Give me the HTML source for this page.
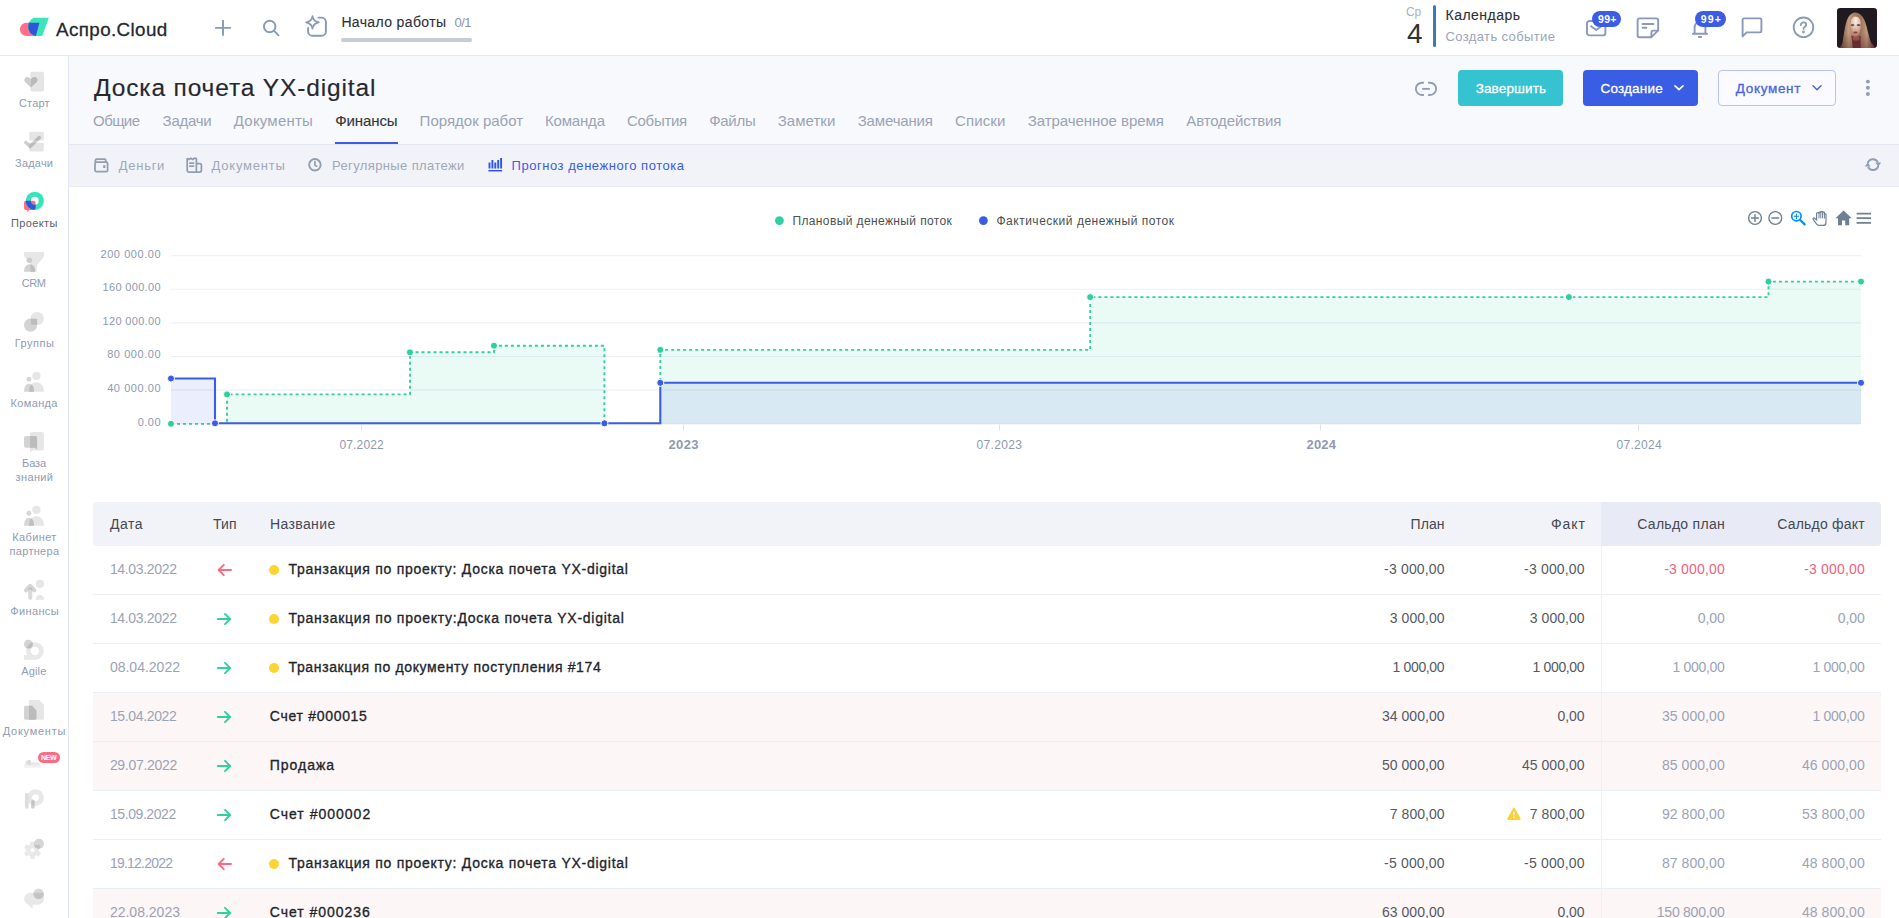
<!DOCTYPE html>
<html lang="ru">
<head>
<meta charset="utf-8">
<title>Доска почета YX-digital</title>
<style>
*{box-sizing:border-box;margin:0;padding:0}
html,body{width:1899px;height:918px;overflow:hidden;background:#fff}
body{position:relative;font-family:"Liberation Sans",sans-serif;color:#333;-webkit-font-smoothing:antialiased}
.a{position:absolute}
.t{position:absolute;white-space:nowrap;line-height:1;font-family:"Liberation Sans",sans-serif}
svg{position:absolute;overflow:visible}
/* top bar */
#topbar{left:0;top:0;width:1899px;height:56px;background:#fff;border-bottom:1px solid #e6e9f2}
/* sidebar */
#sidebar{left:0;top:56px;width:69px;height:862px;background:#fff;border-right:1px solid #e3e7f3}
/* page head */
#pagehead{left:69px;top:56px;width:1830px;height:88px;background:#f8f9fd}
#tabline{left:69px;top:144px;width:1830px;height:1px;background:#e3e7f1}
#tabactive{left:335px;top:142px;width:63px;height:2px;background:#3b5ce4}
#subnav{left:69px;top:145px;width:1830px;height:42px;background:#f2f3f8;border-bottom:1px solid #e9ebf3}
.btn{border-radius:4px;height:36px;top:70px}
/* table */
#thead{left:93px;top:502px;width:1788px;height:44px;background:#f2f3f8;border-radius:4px;overflow:hidden}
#thead i{position:absolute;left:1508px;top:0;width:280px;height:44px;background:#e8ebf5}
.row{left:93px;width:1788px;height:49px;border-bottom:1px solid #eceef6}
.row.p{background:#fdf6f6}
.row i{position:absolute;left:1508px;top:0;width:1px;height:49px;background:#eef0f7}
.dot{width:10px;height:10px;border-radius:50%;background:#fdd432}
</style>
</head>

<body>
<div class="a" id="topbar"></div>
<!-- logo -->
<svg style="left:14px;top:10px" width="40" height="30" viewBox="14 10 40 30">
  <defs><clipPath id="lgc"><path d="M33.6 17.65H47.7C48.5 17.65 48.8 18.1 48.5 18.8L42.6 35.1C42.4 35.6 42 35.9 41.4 35.9H35.2A9.8 9.8 0 0 1 28.2 27A10.4 10.4 0 0 1 33.6 17.65Z"/></clipPath></defs>
  <path d="M26.5 22.75H39.5L35.8 35.9H26.5A6.575 6.575 0 0 1 26.5 22.75Z" fill="#ff6f88"/>
  <path d="M33.6 17.65H47.7C48.5 17.65 48.8 18.1 48.5 18.8L42.6 35.1C42.4 35.6 42 35.9 41.4 35.9H35.2A9.8 9.8 0 0 1 28.2 27A10.4 10.4 0 0 1 33.6 17.65Z" fill="#3be6b9"/>
  <path d="M26.5 22.75H39.5L35.8 35.9H26.5A6.575 6.575 0 0 1 26.5 22.75Z" fill="#3055d8" clip-path="url(#lgc)"/>
</svg>
<!-- plus -->
<svg style="left:205px;top:8px" width="130" height="40" viewBox="205 8 130 40" fill="none" stroke="#8799b3" stroke-width="1.9" stroke-linecap="butt" stroke-linejoin="round">
  <path d="M223 20V35.8M215.1 27.9H230.9"/>
  <circle cx="269.7" cy="26.5" r="5.75"/><path d="M273.9 30.7L278.5 35.3" stroke-linecap="round"/>
  <path d="M318.4 17.6H321.6A4.3 4.3 0 0 1 325.9 21.9V31.4A4.3 4.3 0 0 1 321.6 35.7H312.4A4.3 4.3 0 0 1 308.1 31.4V27.9" stroke-linecap="round"/>
  <path d="M312.5 16.1C313 19.6 314.7 21.6 318.8 22.4C314.7 23.2 313 25.2 312.5 28.7C312 25.2 310.3 23.2 306.2 22.4C310.3 21.6 312 19.6 312.5 16.1Z" stroke-width="1.7"/>
</svg>
<div class="a" style="left:341px;top:38px;width:131px;height:4px;border-radius:2px;background:#c6ccda"></div>
<!-- calendar -->
<div class="a" style="left:1433px;top:5px;width:3px;height:42px;border-radius:1.5px;background:#3a7cb5"></div>
<!-- mail -->
<svg style="left:1586px;top:20px" width="21" height="17" viewBox="0 0 21 17" fill="none" stroke="#8b97bb" stroke-width="1.9" stroke-linejoin="round"><rect x="1" y="1" width="18.4" height="14.4" rx="2.4"/><path d="M5 6.2L10.2 10L15.4 6.2" stroke-linecap="round"/></svg>
<div class="a" style="left:1592.2px;top:10.7px;width:29.2px;height:16px;border-radius:8px;background:#3b5ce4"></div>
<!-- note -->
<svg style="left:1636px;top:17px" width="24" height="22" viewBox="0 0 24 22" fill="none" stroke="#8b97bb" stroke-width="1.9" stroke-linejoin="round" stroke-linecap="round"><path d="M1.6 3.2C1.6 2.2 2.4 1.4 3.4 1.4H20.4C21.4 1.4 22.2 2.2 22.2 3.2V13.4L15.4 20.2H3.4C2.4 20.2 1.6 19.4 1.6 18.4Z"/><path d="M22 13.6H17.2C16.2 13.6 15.4 14.4 15.4 15.4V20"/><path d="M6.6 7H17.4M6.6 10.8H10.4"/></svg>
<!-- bell -->
<svg style="left:1691px;top:19px" width="18" height="20" viewBox="0 0 18 20" fill="none" stroke="#8b97bb" stroke-width="1.9" stroke-linejoin="round" stroke-linecap="round"><path d="M3.6 14.6V8.4C3.6 5.2 6 2.8 9 2.8C12 2.8 14.4 5.2 14.4 8.4V14.6"/><path d="M1.9 14.8H16.1"/><path d="M7.8 18H10.2"/></svg>
<div class="a" style="left:1695.3px;top:10.7px;width:31.2px;height:16px;border-radius:8px;background:#3b5ce4"></div>
<!-- chat -->
<svg style="left:1741px;top:17px" width="22" height="21" viewBox="0 0 22 21" fill="none" stroke="#8b97bb" stroke-width="1.9" stroke-linejoin="round"><path d="M1.6 19.4V2.8C1.6 2 2.2 1.4 3 1.4H19C19.8 1.4 20.4 2 20.4 2.8V14C20.4 14.8 19.8 15.4 19 15.4H5.6Z"/></svg>
<!-- help -->
<svg style="left:1792px;top:16px" width="23" height="23" viewBox="0 0 23 23" fill="none" stroke="#8b9bb5" stroke-width="1.85" stroke-linecap="round"><circle cx="11.5" cy="11.3" r="9.8"/><path d="M8.8 9C8.8 7.4 10 6.4 11.5 6.4C13 6.4 14.2 7.4 14.2 8.8C14.2 10.8 11.5 10.8 11.5 13"/><circle cx="11.5" cy="16" r="0.5" fill="#8b9bb3"/></svg>
<!-- avatar -->
<svg style="left:1837px;top:8px" width="40" height="40" viewBox="0 0 40 40">
  <defs><clipPath id="avc"><rect width="40" height="40" rx="3.2"/></clipPath>
  <filter id="avb" x="-20%" y="-20%" width="140%" height="140%"><feGaussianBlur stdDeviation="0.45"/></filter>
  <radialGradient id="avf" cx="0.5" cy="0.22" r="0.8"><stop offset="0" stop-color="#fbf1ea"/><stop offset="0.5" stop-color="#e0bba9"/><stop offset="1" stop-color="#a9735f"/></radialGradient>
  <linearGradient id="avh" x1="0" y1="0" x2="1" y2="0"><stop offset="0" stop-color="#7d5945"/><stop offset="0.22" stop-color="#c39d80"/><stop offset="0.42" stop-color="#a57c60"/><stop offset="0.6" stop-color="#9b7259"/><stop offset="0.8" stop-color="#c09a7d"/><stop offset="1" stop-color="#76523f"/></linearGradient>
  <linearGradient id="avd" x1="0" y1="0" x2="0" y2="1"><stop offset="0.55" stop-color="#5a2a2c" stop-opacity="0"/><stop offset="1" stop-color="#5a2a2c" stop-opacity="0.45"/></linearGradient></defs>
  <g clip-path="url(#avc)"><rect width="40" height="40" fill="#211920"/>
  <g filter="url(#avb)">
    <path d="M2.5 41C4 35.6 7 33.6 11 33H30C34 33.6 36.6 36 38 41Z" fill="#7a323c"/>
    <path d="M4.6 41C6.4 30 7.4 20 9.4 13.8C11.2 8.2 14.4 4.6 18.2 4.6C22.4 4.6 26 8 28.2 14C30.4 20.4 32 30 36 41Z" fill="url(#avh)"/>
    <path d="M4.6 41C6.4 30 7.4 20 9.4 13.8C11.2 8.2 14.4 4.6 18.2 4.6C22.4 4.6 26 8 28.2 14C30.4 20.4 32 30 36 41Z" fill="url(#avd)"/>
    <path d="M14.2 28C15 31 15.6 36 15.6 41H24C23.6 36 23.2 31 23.8 28Z" fill="#6b2c33"/>
    <path d="M15.4 27.4H22.4L22.6 31.6C20.6 33.2 17.4 33.2 15.8 31.6Z" fill="#8a5546"/>
    <path d="M13.4 17C13.4 11.6 15.4 8.6 18.4 8.6C21.8 8.6 24 11.6 24 17C24 22.6 21.6 28.8 18.6 28.8C15.6 28.8 13.4 22.6 13.4 17Z" fill="url(#avf)"/>
    <path d="M13.8 16.5C15 15.7 16.4 15.8 17.2 16.5V17.8C16.2 18.3 15 18.3 13.8 17.8Z M19.8 16.5C20.8 15.8 22.4 15.7 23.6 16.5V17.8C22.4 18.3 20.8 18.3 19.8 17.8Z" fill="#594245" opacity="0.85"/>
    <ellipse cx="18.5" cy="24.5" rx="2.1" ry="0.95" fill="#8e3a40"/>
    <path d="M18 19V22.2H19.2Z" fill="#cfa38f" opacity="0.7"/>
  </g></g>
</svg>

<div class="a" id="sidebar"></div>
<svg style="left:0;top:56px" width="68" height="862" viewBox="0 56 68 862">
  <defs>
    <clipPath id="cpPr"><path d="M26 200.8H33.6C34.8 200.8 35.6 201.6 35.6 202.8V208C35.6 209.2 34.8 210 33.6 210H29.4L27.3 212.2V210H26C24.9 210 24.05 209.2 24.05 208V202.8C24.05 201.6 24.9 200.8 26 200.8Z"/></clipPath>
    <clipPath id="cpTk"><rect x="29.2" y="131.8" width="14.6" height="8.8" rx="1.4"/><rect x="29.2" y="142.8" width="14.6" height="8.6" rx="1.4"/></clipPath>
    <clipPath id="cpAg"><circle cx="28.4" cy="644.2" r="4.4"/></clipPath>
    <clipPath id="cpGear"><circle cx="38.95" cy="843.7" r="5"/></clipPath>
    <clipPath id="cpChat"><circle cx="38.6" cy="893.7" r="5.2"/></clipPath>
    <linearGradient id="fd" x1="0" y1="0" x2="0" y2="1"><stop offset="0" stop-color="#dcdcdc"/><stop offset="1" stop-color="#f6f6f6"/></linearGradient>
  </defs>
  <!-- Старт -->
  <rect x="30.4" y="71.8" width="13.6" height="19.6" rx="1.6" fill="#e5e5e5"/>
  <path d="M30.9 87.6L25.2 82C23.4 80.2 24.5 76.9 27.2 76.9C28.9 76.9 30.2 77.9 30.9 79.2C31.6 77.9 32.9 76.9 34.6 76.9C37.3 76.9 38.4 80.2 36.6 82Z" fill="#cecece"/>
  <path d="M30.9 87.6V79.2C31.6 77.9 32.9 76.9 34.6 76.9C37.3 76.9 38.4 80.2 36.6 82Z" fill="#bababa"/>
  <!-- Задачи -->
  <rect x="29.2" y="131.8" width="14.6" height="8.8" rx="1.4" fill="#e5e5e5"/>
  <rect x="29.2" y="142.8" width="14.6" height="8.6" rx="1.4" fill="#e5e5e5"/>
  <path d="M25.8 142.4L30.2 146.4L39.2 137.6" fill="none" stroke="#cecece" stroke-width="3.4" stroke-linecap="round" stroke-linejoin="round"/>
  <path d="M25.8 142.4L30.2 146.4L39.2 137.6" fill="none" stroke="#bababa" stroke-width="3.4" stroke-linecap="round" stroke-linejoin="round" clip-path="url(#cpTk)"/>
  <!-- Проекты -->
  <path d="M26 200.8H33.6C34.8 200.8 35.6 201.6 35.6 202.8V208C35.6 209.2 34.8 210 33.6 210H29.4L27.3 212.2V210H26C24.9 210 24.05 209.2 24.05 208V202.8C24.05 201.6 24.9 200.8 26 200.8Z" fill="#ff6b84"/>
  <circle cx="34.8" cy="200.8" r="6.52" fill="none" stroke="#38e4b7" stroke-width="5.15"/>
  <circle cx="34.8" cy="200.8" r="6.52" fill="none" stroke="#3355d8" stroke-width="5.15" clip-path="url(#cpPr)"/>
  <!-- CRM -->
  <path d="M24.05 252H44.05V255.6C44.05 257 43.4 257.8 42.2 259C38.6 262.6 36.7 265 36.7 268V271.8H30.4V266C30.4 263 28.6 260.6 25.8 258.6C24.6 257.6 24.05 256.8 24.05 255.6Z" fill="#e6e6e6"/>
  <circle cx="29.3" cy="260.25" r="2.75" fill="#cdcdcd"/>
  <path d="M24.05 271.8C24.05 267 26.2 264.3 29.6 264.3C33 264.3 35.2 267 35.2 271.8Z" fill="#d2d2d2"/>
  <path d="M30.5 271.8V264.4C33.4 264.8 35.2 267.4 35.2 271.8Z" fill="#bebebe"/>
  <!-- Группы -->
  <circle cx="37.2" cy="318.6" r="6.7" fill="#e6e6e6"/>
  <circle cx="30.6" cy="325.1" r="6.55" fill="#d3d3d3"/>
  <rect x="31" y="318.7" width="6.1" height="6" fill="#bcbcbc"/>
  <!-- Команда -->
  <circle cx="36.4" cy="375.9" r="4.1" fill="#e6e6e6"/>
  <path d="M28.8 391.8C28.8 386 31.6 382.2 36.4 382.2C41.2 382.2 44 386 44 391.8Z" fill="#e6e6e6"/>
  <circle cx="28.95" cy="379.3" r="2.45" fill="#d6d6d6"/>
  <path d="M24.05 391.8C24.05 387 25.8 383.8 29 383.8C32.2 383.8 34 387 34 391.8Z" fill="#d6d6d6"/>
  <path d="M29 391.8C29 388.4 30 385.4 31.4 384.4C33 385.6 34 388.2 34 391.8Z" fill="#bebebe"/>
  <!-- База знаний -->
  <path d="M32 432H41.9C43 432 43.9 432.9 43.9 434V448.6C43.9 449.7 43 450.6 41.9 450.6H32.6L30.04 452.2V434C30.04 432.9 30.9 432 32 432Z" fill="#e6e6e6"/>
  <path d="M26 435.9H35.1C36.2 435.9 37.07 436.8 37.07 437.9V449.2L34.8 447.8H26C24.9 447.8 24.05 446.9 24.05 445.8V437.9C24.05 436.8 24.9 435.9 26 435.9Z" fill="#d3d3d3"/>
  <path d="M30.04 435.9H35.1C36.2 435.9 37.07 436.8 37.07 437.9V449.2L34.8 447.8H30.04Z" fill="#bcbcbc"/>
  <!-- Кабинет партнера -->
  <circle cx="36.4" cy="509.9" r="4.1" fill="#e6e6e6"/>
  <path d="M28.8 525.8C28.8 520 31.6 516.2 36.4 516.2C41.2 516.2 44 520 44 525.8Z" fill="#e6e6e6"/>
  <circle cx="28.95" cy="513.3" r="2.45" fill="#d6d6d6"/>
  <path d="M24.05 525.8C24.05 521 25.8 517.8 29 517.8C32.2 517.8 34 521 34 525.8Z" fill="#d6d6d6"/>
  <path d="M29 525.8C29 522.4 30 519.4 31.4 518.4C33 519.6 34 522.2 34 525.8Z" fill="#bebebe"/>
  <!-- Финансы -->
  <circle cx="39.96" cy="583.9" r="4.08" fill="#e6e6e6"/>
  <path d="M35.9 599.8C35.9 596.8 37.4 595.06 40 595.06C42.6 595.06 44.04 596.8 44.04 599.8Z" fill="#e6e6e6"/>
  <path d="M26 590.4L30.2 585.9L34.4 590.4" fill="none" stroke="#d4d4d4" stroke-width="4" stroke-linecap="round" stroke-linejoin="round"/>
  <rect x="28.2" y="587.6" width="4.1" height="12.1" rx="2.05" fill="#9a9a9a" fill-opacity="0.38"/>
  <!-- Agile -->
  <circle cx="34.95" cy="651" r="6.52" fill="none" stroke="#e8e8e8" stroke-width="4.65"/>
  <path d="M24.05 655H31V659.8H24.05Z M31 655.6C32 657 33.4 659.8 34.95 659.8H31Z" fill="#e8e8e8"/>
  <circle cx="28.4" cy="644.2" r="4.4" fill="#d4d4d4"/>
  <circle cx="34.95" cy="651" r="6.52" fill="none" stroke="#bebebe" stroke-width="4.65" clip-path="url(#cpAg)"/>
  <!-- Документы -->
  <path d="M30.4 700H39.1L43.9 704.7V718.3C43.9 719.2 43.3 719.8 42.4 719.8H28.95V701.5C28.95 700.6 29.6 700 30.4 700Z" fill="#e6e6e6"/>
  <path d="M25.5 705.8H32.06L36.4 710.4V718.3C36.4 719.2 35.8 719.8 34.9 719.8H25.5C24.7 719.8 24.05 719.2 24.05 718.3V707.3C24.05 706.4 24.7 705.8 25.5 705.8Z" fill="#d3d3d3"/>
  <path d="M28.95 705.8H32.06L36.4 710.4V718.3C36.4 719.2 35.8 719.8 34.9 719.8H28.95Z" fill="#bcbcbc"/>
  <!-- new (faded) -->
  <path d="M24.1 768C24.1 763 26 759.9 29 759.9C30.2 759.9 30.8 760.6 31 762.4H37.4C39.6 762.4 40.9 764.4 40.9 768Z" fill="url(#fd)"/>
  <path d="M27.4 765C27.4 762 28.4 760.2 30.2 760C30.8 761 31 763 30.8 765Z" fill="#d6d6d6" opacity="0.8"/>
  <!-- P icon -->
  <circle cx="35.5" cy="797.6" r="5.9" fill="none" stroke="#e8e8e8" stroke-width="5"/>
  <rect x="24.9" y="793" width="3.8" height="15.7" rx="1.9" fill="#dddddd"/>
  <rect x="31" y="799.5" width="3.8" height="9.2" rx="1.9" fill="#d0d0d0"/>
  <rect x="31.7" y="800.4" width="2.6" height="5" rx="1.3" fill="#c2c2c2"/>
  <!-- gear -->
  <g fill="#e8e8e8"><circle cx="32.5" cy="850.3" r="6.3"/>
  <g transform="translate(32.5 850.3)"><rect x="-2.2" y="-8.6" width="4.4" height="17.2" rx="1.1"/><rect x="-2.2" y="-8.6" width="4.4" height="17.2" rx="1.1" transform="rotate(60)"/><rect x="-2.2" y="-8.6" width="4.4" height="17.2" rx="1.1" transform="rotate(120)"/></g></g>
  <circle cx="32.5" cy="850.3" r="2" fill="#fff"/>
  <circle cx="38.95" cy="843.7" r="5" fill="#d6d6d6"/>
  <g clip-path="url(#cpGear)" fill="#c2c2c2"><circle cx="32.5" cy="850.3" r="6.3"/><g transform="translate(32.5 850.3)"><rect x="-2.2" y="-8.6" width="4.4" height="17.2" rx="1.1" transform="rotate(60)"/></g></g>
  <!-- chat -->
  <path d="M24.2 899C24.2 895.6 27 892.8 30.4 892.8H44V898.8C44 902.2 41.4 904.8 38 904.8H32.5V908.8L25.6 902.6C24.7 901.7 24.2 900.4 24.2 899Z" fill="#e8e8e8"/>
  <circle cx="38.6" cy="893.7" r="5.2" fill="#d8d8d8"/>
  <path d="M32.4 892.8H44V898.8C44 899.4 43.9 899.9 43.8 900.4H32.4Z" fill="#c4c4c4" clip-path="url(#cpChat)"/>
</svg>
<div class="a" style="left:38px;top:751.7px;width:22px;height:11px;border-radius:5.5px;background:#ff6b84"></div>

<div class="a" id="pagehead"></div>
<div class="a" id="tabline"></div>
<div class="a" id="tabactive"></div>
<div class="a" id="subnav"></div>
<!-- link icon -->
<svg style="left:1414px;top:81px" width="24" height="16" viewBox="0 0 24 16" fill="none" stroke="#8e9db5" stroke-width="1.85" stroke-linecap="butt"><path d="M9.9 1.75H7.9C4.5 1.75 1.85 4.45 1.85 7.85C1.85 11.25 4.5 13.95 7.9 13.95H9.9"/><path d="M14.1 1.75H16.1C19.5 1.75 22.15 4.45 22.15 7.85C22.15 11.25 19.5 13.95 16.1 13.95H14.1"/><path d="M8.2 7.85H15.9"/></svg>
<div class="a btn" style="left:1458px;width:105px;background:#35c3d2"></div>
<div class="a btn" style="left:1583px;width:115px;background:#3a5de6"></div>
<div class="a btn" style="left:1718px;width:118px;background:#fbfbff;border:1px solid #b7c2f6"></div>
<svg style="left:1673px;top:84px" width="12" height="8" viewBox="0 0 12 8" fill="none" stroke="#fff" stroke-width="1.7" stroke-linecap="round" stroke-linejoin="round"><path d="M2 1.8L6 5.7L10 1.8"/></svg>
<svg style="left:1811px;top:84px" width="12" height="8" viewBox="0 0 12 8" fill="none" stroke="#4763e4" stroke-width="1.5" stroke-linecap="round" stroke-linejoin="round"><path d="M2 1.8L6 5.7L10 1.8"/></svg>
<svg style="left:1865px;top:78px" width="6" height="20" viewBox="0 0 6 20" fill="#8e9db5"><circle cx="2.9" cy="3.6" r="1.95"/><circle cx="2.9" cy="9.8" r="1.95"/><circle cx="2.9" cy="15.95" r="1.95"/></svg>
<!-- subnav icons -->
<svg style="left:94px;top:157.5px" width="15" height="15" viewBox="0 0 15 15" fill="none" stroke="#919eb0" stroke-width="1.75" stroke-linejoin="round"><path d="M1.4 4V2.6C1.4 1.7 2 1.1 2.9 1.1H10.4C11.2 1.1 11.8 1.7 11.8 2.6V4"/><rect x="1" y="4" width="12.6" height="9.6" rx="1.4"/><rect x="9.2" y="7.2" width="2.2" height="2.8" fill="#919eb0" stroke="none"/></svg>
<svg style="left:185.5px;top:156.5px" width="17" height="17" viewBox="0 0 17 17" fill="none" stroke="#919eb0" stroke-width="1.75" stroke-linejoin="round"><path d="M1.2 1.6L3 2.4L4.8 1.2L6.6 2.4L8.4 1.2L10.4 1.6V15.2H2.8C1.8 15.2 1.2 14.6 1.2 13.6Z"/><path d="M10.4 6.6H14C14.8 6.6 15.4 7.2 15.4 8V13.6C15.4 14.6 14.6 15.2 13.6 15.2H10.4"/><path d="M3.8 6H7.6M3.8 9H7.6" stroke-linecap="round"/></svg>
<svg style="left:300px;top:148px" width="30" height="30" viewBox="300 148 30 30" fill="none" stroke="#919eb0" stroke-width="1.9" stroke-linecap="round" stroke-linejoin="round"><circle cx="314.9" cy="164.8" r="5.75"/><path d="M314.9 161.6V165L316.6 166.2" stroke-width="1.7"/></svg>
<svg style="left:480px;top:150px" width="30" height="26" viewBox="480 150 30 26" fill="none" stroke="#3054e8" stroke-width="1.9" stroke-linecap="butt"><path d="M489.5 168.6V162.4M492.4 168.6V160M495.3 168.6V162.4M498.2 168.6V160M501.1 168.6V157.9"/><path d="M488.4 170.7H502.1" stroke-width="1.5"/></svg>
<!-- refresh -->
<svg style="left:1863px;top:155px" width="20" height="20" viewBox="1863 155 20 20"><g fill="none" stroke="#8e9db5" stroke-width="1.9" stroke-linecap="butt"><path d="M1867.7 163.4A5.4 5.4 0 0 1 1877.9 162.4"/><path d="M1878.3 165.8A5.4 5.4 0 0 1 1868.1 166.8"/></g><path d="M1875.4 162.6H1881.2L1878.3 166.6Z" fill="#8e9db5"/><path d="M1864.8 166.6H1870.6L1867.7 162.6Z" fill="#8e9db5"/></svg>

<svg style="left:0;top:187px" width="1899" height="300" viewBox="0 187 1899 300">
  <!-- grid -->
  <g stroke="#edeff6" stroke-width="1.1">
    <path d="M171 255.7H1861M171 289.3H1861M171 322.9H1861M171 356.5H1861M171 390.1H1861M171 423.9H1861"/>
  </g>
  <!-- x ticks -->
  <g stroke="#dfe3ee" stroke-width="1"><path d="M361.5 424.4V430.5M683.5 424.4V430.5M999.5 424.4V430.5M1320.5 424.4V430.5M1638.5 424.4V430.5"/></g>
  <!-- green area -->
  <path d="M227 423.7V394.4H410V352.3H494V345.7H604.4V423.7Z M660.3 423.7V349.9H1090.2V297.1H1768.5V281.6H1861V423.7Z" fill="#2fcf9c" fill-opacity="0.1"/>
  <!-- blue area -->
  <path d="M171 423.7V378.5H215V423.7Z" fill="#3b5ce4" fill-opacity="0.10"/>
  <path d="M660.3 423.7V382.8H1861V423.7Z" fill="#3b5ce4" fill-opacity="0.10"/>
  <!-- green dotted line -->
  <path d="M171 423.9H212 M227 421.8V394.4H410V352.3H494V345.7H604.4V421.6 M660.3 381V349.9H1090.2V297.1H1768.5V281.6H1861" fill="none" stroke="#31cfa0" stroke-width="1.9" stroke-dasharray="3 3"/>
  <!-- blue line -->
  <path d="M171 378.5H215V423.3H660.3V382.8H1861" fill="none" stroke="#3b5ce4" stroke-width="2.1" stroke-linejoin="miter"/>
  <!-- markers -->
  <g fill="#31cfa0" stroke="#fff" stroke-width="1">
    <circle cx="171" cy="423.8" r="3.55"/><circle cx="227" cy="394.4" r="3.55"/><circle cx="410" cy="352.3" r="3.55"/><circle cx="494" cy="345.7" r="3.55"/>
    <circle cx="660.3" cy="349.9" r="3.55"/><circle cx="1090.2" cy="297.1" r="3.55"/><circle cx="1568.9" cy="297.1" r="3.55"/><circle cx="1768.5" cy="281.6" r="3.55"/><circle cx="1861" cy="281.6" r="3.55"/>
  </g>
  <g fill="#3b5ce4" stroke="#fff" stroke-width="1">
    <circle cx="171" cy="378.5" r="3.55"/><circle cx="215" cy="423.3" r="3.55"/><circle cx="604.4" cy="423.3" r="3.55"/><circle cx="660.3" cy="382.8" r="3.55"/><circle cx="1861" cy="382.8" r="3.55"/>
  </g>
  <!-- legend dots -->
  <circle cx="779.4" cy="220.6" r="4.4" fill="#31cfa0"/>
  <circle cx="983.4" cy="220.6" r="4.4" fill="#3b5ce4"/>
  <!-- toolbar -->
  <g fill="none" stroke="#6e8192" stroke-width="1.4" stroke-linecap="round">
    <circle cx="1755" cy="218" r="6.4"/><path d="M1751.6 218H1758.4M1755 214.6V221.4"/>
    <circle cx="1775.3" cy="218" r="6.4"/><path d="M1771.9 218H1778.7"/>
  </g>
  <g fill="none" stroke="#008ffb" stroke-width="1.7" stroke-linecap="round">
    <circle cx="1796.4" cy="216.2" r="4.7"/><path d="M1800 219.8L1804.6 224.4" stroke-width="2.2"/><path d="M1794.2 216.2H1798.6M1796.4 214V218.4" stroke-width="1.1"/>
  </g>
  <!-- hand -->
  <path d="M1816.6 213.4V220.2L1814.6 218.2C1813.6 217.4 1812.6 218.4 1813.2 219.4L1816.6 224.2C1817.2 225 1818 225.4 1819 225.4H1823C1824.8 225.4 1826 224.2 1826 222.4V214.6C1826 213.4 1824.4 213.4 1824.4 214.6V212.8C1824.4 211.6 1822.6 211.6 1822.6 212.8V212.2C1822.6 211 1820.8 211 1820.8 212.2V212.8C1820.8 211.6 1819 211.6 1819 212.8V213.4C1819 212.2 1816.6 212.2 1816.6 213.4Z" fill="#fff" stroke="#6e8192" stroke-width="1.2" stroke-linejoin="round"/>
  <path d="M1819 213V218.4M1820.8 212.4V218.4M1822.6 212.6V218.4M1824.4 214.4V218.6" stroke="#6e8192" stroke-width="1"/>
  <!-- home -->
  <path d="M1843.6 210.6L1835.4 218.3H1838V225.3H1842V220.4H1845.2V225.3H1849.2V218.3H1851.8Z" fill="#6e8192"/>
  <!-- menu -->
  <path d="M1856.6 213.6H1871M1856.6 218.2H1871M1856.6 222.8H1871" stroke="#6e8192" stroke-width="1.7" fill="none"/>
</svg>

<div class="a" id="thead"><i></i></div>
<div class="a row" style="top:546px"><i></i></div>
<svg style="left:217.2px;top:562.8px" width="16" height="14" viewBox="0 0 16 14" fill="none" stroke="#fb6a83" stroke-width="1.9" stroke-linecap="round" stroke-linejoin="round"><path d="M14 7H1.8M6.8 1.8L1.6 7L6.8 12.2"/></svg>
<div class="a dot" style="left:269.2px;top:564.9px"></div>
<div class="a row" style="top:595px"><i></i></div>
<svg style="left:216.4px;top:611.8px" width="16" height="14" viewBox="0 0 16 14" fill="none" stroke="#30d0a0" stroke-width="1.9" stroke-linecap="round" stroke-linejoin="round"><path d="M1.8 7H14M9 1.8L14.2 7L9 12.2"/></svg>
<div class="a dot" style="left:269.2px;top:613.9px"></div>
<div class="a row" style="top:644px"><i></i></div>
<svg style="left:216.4px;top:660.8px" width="16" height="14" viewBox="0 0 16 14" fill="none" stroke="#30d0a0" stroke-width="1.9" stroke-linecap="round" stroke-linejoin="round"><path d="M1.8 7H14M9 1.8L14.2 7L9 12.2"/></svg>
<div class="a dot" style="left:269.2px;top:662.9px"></div>
<div class="a row p" style="top:693px"><i></i></div>
<svg style="left:216.4px;top:709.8px" width="16" height="14" viewBox="0 0 16 14" fill="none" stroke="#30d0a0" stroke-width="1.9" stroke-linecap="round" stroke-linejoin="round"><path d="M1.8 7H14M9 1.8L14.2 7L9 12.2"/></svg>
<div class="a row p" style="top:742px"><i></i></div>
<svg style="left:216.4px;top:758.8px" width="16" height="14" viewBox="0 0 16 14" fill="none" stroke="#30d0a0" stroke-width="1.9" stroke-linecap="round" stroke-linejoin="round"><path d="M1.8 7H14M9 1.8L14.2 7L9 12.2"/></svg>
<div class="a row" style="top:791px"><i></i></div>
<svg style="left:216.4px;top:807.8px" width="16" height="14" viewBox="0 0 16 14" fill="none" stroke="#30d0a0" stroke-width="1.9" stroke-linecap="round" stroke-linejoin="round"><path d="M1.8 7H14M9 1.8L14.2 7L9 12.2"/></svg>
<div class="a row" style="top:840px"><i></i></div>
<svg style="left:217.2px;top:856.8px" width="16" height="14" viewBox="0 0 16 14" fill="none" stroke="#fb6a83" stroke-width="1.9" stroke-linecap="round" stroke-linejoin="round"><path d="M14 7H1.8M6.8 1.8L1.6 7L6.8 12.2"/></svg>
<div class="a dot" style="left:269.2px;top:858.9px"></div>
<div class="a row p" style="top:889px"><i></i></div>
<svg style="left:216.4px;top:905.8px" width="16" height="14" viewBox="0 0 16 14" fill="none" stroke="#30d0a0" stroke-width="1.9" stroke-linecap="round" stroke-linejoin="round"><path d="M1.8 7H14M9 1.8L14.2 7L9 12.2"/></svg>
<svg style="left:1507.3px;top:806.9px" width="14" height="13.5" viewBox="0 0 14 13.5"><path d="M7 0.6C7.4 0.6 7.7 0.8 7.9 1.2L13.5 11.3C13.9 12.1 13.4 12.9 12.5 12.9H1.5C0.6 12.9 0.1 12.1 0.5 11.3L6.1 1.2C6.3 0.8 6.6 0.6 7 0.6Z" fill="#fdd033"/><path d="M7 4.7V8.3" stroke="#fff" stroke-width="1.5" stroke-linecap="butt"/><rect x="6.25" y="9.6" width="1.5" height="1.5" fill="#fff"/></svg>
<!-- text runs -->
<span class="t" id="t0" style="top:21px;font-size:18.8px;color:#25262c;-webkit-text-stroke:0.28px #25262c;letter-spacing:0.382px;left:56.10px;">Аспро.Cloud</span>
<span class="t" id="t1" style="top:15px;font-size:14px;color:#2d2f36;-webkit-text-stroke:0.12px #2d2f36;letter-spacing:0.365px;left:341.40px;">Начало работы</span>
<span class="t" id="t2" style="top:16px;font-size:13px;color:#8a94a6;letter-spacing:-0.439px;left:454.40px;">0/1</span>
<span class="t" id="t3" style="top:6px;font-size:12px;color:#a9b1c2;letter-spacing:-0.144px;left:1406.00px;">Ср</span>
<span class="t" id="t4" style="top:20px;font-size:28px;color:#333;left:1407.00px;">4</span>
<span class="t" id="t5" style="top:8px;font-size:14px;color:#2d2f36;-webkit-text-stroke:0.12px #2d2f36;letter-spacing:0.479px;left:1445.50px;">Календарь</span>
<span class="t" id="t6" style="top:30px;font-size:13px;color:#9aa5b8;letter-spacing:0.383px;left:1445.50px;">Создать событие</span>
<span class="t" id="t7" style="top:14px;font-size:10.5px;color:#fff;font-weight:700;letter-spacing:0.244px;left:1598.10px;">99+</span>
<span class="t" id="t8" style="top:14px;font-size:10.5px;color:#fff;font-weight:700;letter-spacing:1.194px;left:1700.70px;">99+</span>
<span class="t" id="t9" style="top:76px;font-size:24.5px;color:#27282e;-webkit-text-stroke:0.15px #27282e;letter-spacing:0.854px;left:94.00px;">Доска почета YX-digital</span>
<span class="t" id="t10" style="top:113px;font-size:15px;color:#9aa3b5;letter-spacing:-0.607px;left:93.10px;">Общие</span>
<span class="t" id="t11" style="top:113px;font-size:15px;color:#9aa3b5;letter-spacing:-0.275px;left:162.60px;">Задачи</span>
<span class="t" id="t12" style="top:113px;font-size:15px;color:#9aa3b5;letter-spacing:0.209px;left:233.80px;">Документы</span>
<span class="t" id="t13" style="top:113px;font-size:15px;color:#33353c;-webkit-text-stroke:0.12px #33353c;letter-spacing:-0.114px;left:335.30px;">Финансы</span>
<span class="t" id="t14" style="top:113px;font-size:15px;color:#9aa3b5;letter-spacing:0.008px;left:419.60px;">Порядок работ</span>
<span class="t" id="t15" style="top:113px;font-size:15px;color:#9aa3b5;letter-spacing:-0.188px;left:545.00px;">Команда</span>
<span class="t" id="t16" style="top:113px;font-size:15px;color:#9aa3b5;letter-spacing:-0.287px;left:627.00px;">События</span>
<span class="t" id="t17" style="top:113px;font-size:15px;color:#9aa3b5;letter-spacing:-0.293px;left:709.20px;">Файлы</span>
<span class="t" id="t18" style="top:113px;font-size:15px;color:#9aa3b5;letter-spacing:0.037px;left:777.70px;">Заметки</span>
<span class="t" id="t19" style="top:113px;font-size:15px;color:#9aa3b5;letter-spacing:-0.152px;left:857.70px;">Замечания</span>
<span class="t" id="t20" style="top:113px;font-size:15px;color:#9aa3b5;letter-spacing:0.124px;left:955.00px;">Списки</span>
<span class="t" id="t21" style="top:113px;font-size:15px;color:#9aa3b5;letter-spacing:-0.054px;left:1027.80px;">Затраченное время</span>
<span class="t" id="t22" style="top:113px;font-size:15px;color:#9aa3b5;letter-spacing:-0.135px;left:1186.30px;">Автодействия</span>
<span class="t" id="t23" style="top:159px;font-size:13px;color:#a0a8b8;letter-spacing:0.720px;left:118.80px;">Деньги</span>
<span class="t" id="t24" style="top:159px;font-size:13px;color:#a0a8b8;letter-spacing:0.773px;left:211.60px;">Документы</span>
<span class="t" id="t25" style="top:159px;font-size:13px;color:#a0a8b8;letter-spacing:0.380px;left:332.00px;">Регулярные платежи</span>
<span class="t" id="t26" style="top:159px;font-size:13px;color:#3b5ce4;letter-spacing:0.535px;left:511.60px;">Прогноз денежного потока</span>
<span class="t" id="t27" style="top:82px;font-size:13.5px;color:#fff;-webkit-text-stroke:0.3px #fff;letter-spacing:0.125px;left:1475.70px;">Завершить</span>
<span class="t" id="t28" style="top:82px;font-size:13.5px;color:#fff;-webkit-text-stroke:0.3px #fff;letter-spacing:0.187px;left:1600.50px;">Создание</span>
<span class="t" id="t29" style="top:82px;font-size:13.5px;color:#4763e4;-webkit-text-stroke:0.3px #4763e4;letter-spacing:0.673px;left:1735.80px;">Документ</span>
<span class="t" id="t30" style="top:249px;font-size:11px;color:#8e9ab0;letter-spacing:0.560px;left:100.50px;">200 000.00</span>
<span class="t" id="t31" style="top:282px;font-size:11px;color:#8e9ab0;letter-spacing:0.337px;left:102.50px;">160 000.00</span>
<span class="t" id="t32" style="top:316px;font-size:11px;color:#8e9ab0;letter-spacing:0.337px;left:102.50px;">120 000.00</span>
<span class="t" id="t33" style="top:349px;font-size:11px;color:#8e9ab0;letter-spacing:0.558px;left:107.20px;">80 000.00</span>
<span class="t" id="t34" style="top:383px;font-size:11px;color:#8e9ab0;letter-spacing:0.558px;left:107.20px;">40 000.00</span>
<span class="t" id="t35" style="top:417px;font-size:11px;color:#8e9ab0;letter-spacing:0.493px;left:137.70px;">0.00</span>
<span class="t" id="t36" style="top:439px;font-size:12px;color:#8e9ab0;letter-spacing:0.168px;left:339.40px;">07.2022</span>
<span class="t" id="t37" style="top:438px;font-size:13px;color:#8e9ab0;font-weight:700;letter-spacing:0.393px;left:668.50px;">2023</span>
<span class="t" id="t38" style="top:439px;font-size:12px;color:#8e9ab0;letter-spacing:0.352px;left:976.50px;">07.2023</span>
<span class="t" id="t39" style="top:438px;font-size:13px;color:#8e9ab0;font-weight:700;letter-spacing:0.259px;left:1306.40px;">2024</span>
<span class="t" id="t40" style="top:439px;font-size:12px;color:#8e9ab0;letter-spacing:0.335px;left:1616.40px;">07.2024</span>
<span class="t" id="t41" style="top:215px;font-size:12px;color:#4a5054;letter-spacing:0.386px;left:792.40px;">Плановый денежный поток</span>
<span class="t" id="t42" style="top:215px;font-size:12px;color:#4a5054;letter-spacing:0.518px;left:996.40px;">Фактический денежный поток</span>
<span class="t" id="t43" style="top:517px;font-size:14px;color:#444852;letter-spacing:0.528px;left:109.90px;">Дата</span>
<span class="t" id="t44" style="top:517px;font-size:14px;color:#444852;letter-spacing:0.178px;left:213.00px;">Тип</span>
<span class="t" id="t45" style="top:517px;font-size:14px;color:#444852;letter-spacing:0.377px;left:270.00px;">Название</span>
<span class="t" id="t46" style="top:517px;font-size:14px;color:#444852;letter-spacing:0.117px;left:1410.50px;">План</span>
<span class="t" id="t47" style="top:517px;font-size:14px;color:#444852;letter-spacing:0.892px;left:1551.00px;">Факт</span>
<span class="t" id="t48" style="top:517px;font-size:14px;color:#444852;letter-spacing:0.276px;left:1637.30px;">Сальдо план</span>
<span class="t" id="t49" style="top:517px;font-size:14px;color:#444852;letter-spacing:0.212px;left:1777.20px;">Сальдо факт</span>
<span class="t" id="t50" style="top:562px;font-size:14px;color:#9aa3b5;letter-spacing:-0.331px;left:109.90px;">14.03.2022</span>
<span class="t" id="t51" style="top:562px;font-size:14px;color:#22242a;-webkit-text-stroke:0.32px #22242a;letter-spacing:0.729px;left:288.50px;">Транзакция по проекту: Доска почета YX-digital</span>
<span class="t" id="t52" style="top:562px;font-size:14px;color:#555962;letter-spacing:0.166px;left:1384.10px;">-3 000,00</span>
<span class="t" id="t53" style="top:562px;font-size:14px;color:#555962;letter-spacing:0.166px;left:1524.10px;">-3 000,00</span>
<span class="t" id="t54" style="top:562px;font-size:14px;color:#f4627a;letter-spacing:0.166px;left:1664.20px;">-3 000,00</span>
<span class="t" id="t55" style="top:562px;font-size:14px;color:#f4627a;letter-spacing:0.166px;left:1804.20px;">-3 000,00</span>
<span class="t" id="t56" style="top:611px;font-size:14px;color:#9aa3b5;letter-spacing:-0.331px;left:109.90px;">14.03.2022</span>
<span class="t" id="t57" style="top:611px;font-size:14px;color:#22242a;-webkit-text-stroke:0.32px #22242a;letter-spacing:0.741px;left:288.50px;">Транзакция по проекту:Доска почета YX-digital</span>
<span class="t" id="t58" style="top:611px;font-size:14px;color:#555962;letter-spacing:0.043px;left:1389.80px;">3 000,00</span>
<span class="t" id="t59" style="top:611px;font-size:14px;color:#555962;letter-spacing:0.043px;left:1529.80px;">3 000,00</span>
<span class="t" id="t60" style="top:611px;font-size:14px;color:#9aa3b5;letter-spacing:-0.083px;left:1697.70px;">0,00</span>
<span class="t" id="t61" style="top:611px;font-size:14px;color:#9aa3b5;letter-spacing:-0.083px;left:1837.70px;">0,00</span>
<span class="t" id="t62" style="top:660px;font-size:14px;color:#9aa3b5;letter-spacing:0.002px;left:109.90px;">08.04.2022</span>
<span class="t" id="t63" style="top:660px;font-size:14px;color:#22242a;-webkit-text-stroke:0.32px #22242a;letter-spacing:0.639px;left:288.50px;">Транзакция по документу поступления #174</span>
<span class="t" id="t64" style="top:660px;font-size:14px;color:#555962;letter-spacing:-0.343px;left:1392.50px;">1 000,00</span>
<span class="t" id="t65" style="top:660px;font-size:14px;color:#555962;letter-spacing:-0.343px;left:1532.50px;">1 000,00</span>
<span class="t" id="t66" style="top:660px;font-size:14px;color:#9aa3b5;letter-spacing:-0.343px;left:1672.60px;">1 000,00</span>
<span class="t" id="t67" style="top:660px;font-size:14px;color:#9aa3b5;letter-spacing:-0.343px;left:1812.60px;">1 000,00</span>
<span class="t" id="t68" style="top:709px;font-size:14px;color:#9aa3b5;letter-spacing:-0.353px;left:109.90px;">15.04.2022</span>
<span class="t" id="t69" style="top:709px;font-size:14px;color:#22242a;-webkit-text-stroke:0.32px #22242a;letter-spacing:0.702px;left:269.80px;">Счет #000015</span>
<span class="t" id="t70" style="top:709px;font-size:14px;color:#555962;letter-spacing:0.050px;left:1381.90px;">34 000,00</span>
<span class="t" id="t71" style="top:709px;font-size:14px;color:#555962;letter-spacing:-0.083px;left:1557.60px;">0,00</span>
<span class="t" id="t72" style="top:709px;font-size:14px;color:#9aa3b5;letter-spacing:0.050px;left:1662.00px;">35 000,00</span>
<span class="t" id="t73" style="top:709px;font-size:14px;color:#9aa3b5;letter-spacing:-0.343px;left:1812.60px;">1 000,00</span>
<span class="t" id="t74" style="top:758px;font-size:14px;color:#9aa3b5;letter-spacing:-0.309px;left:109.90px;">29.07.2022</span>
<span class="t" id="t75" style="top:758px;font-size:14px;color:#22242a;-webkit-text-stroke:0.32px #22242a;letter-spacing:0.960px;left:269.80px;">Продажа</span>
<span class="t" id="t76" style="top:758px;font-size:14px;color:#555962;letter-spacing:0.050px;left:1381.90px;">50 000,00</span>
<span class="t" id="t77" style="top:758px;font-size:14px;color:#555962;letter-spacing:0.050px;left:1521.90px;">45 000,00</span>
<span class="t" id="t78" style="top:758px;font-size:14px;color:#9aa3b5;letter-spacing:0.050px;left:1662.00px;">85 000,00</span>
<span class="t" id="t79" style="top:758px;font-size:14px;color:#9aa3b5;letter-spacing:0.050px;left:1802.00px;">46 000,00</span>
<span class="t" id="t80" style="top:807px;font-size:14px;color:#9aa3b5;letter-spacing:-0.409px;left:109.90px;">15.09.2022</span>
<span class="t" id="t81" style="top:807px;font-size:14px;color:#22242a;-webkit-text-stroke:0.32px #22242a;letter-spacing:1.002px;left:269.80px;">Счет #000002</span>
<span class="t" id="t82" style="top:807px;font-size:14px;color:#555962;letter-spacing:0.043px;left:1389.80px;">7 800,00</span>
<span class="t" id="t83" style="top:807px;font-size:14px;color:#555962;letter-spacing:0.043px;left:1529.80px;">7 800,00</span>
<span class="t" id="t84" style="top:807px;font-size:14px;color:#9aa3b5;letter-spacing:0.050px;left:1662.00px;">92 800,00</span>
<span class="t" id="t85" style="top:807px;font-size:14px;color:#9aa3b5;letter-spacing:0.050px;left:1802.00px;">53 800,00</span>
<span class="t" id="t86" style="top:856px;font-size:14px;color:#9aa3b5;letter-spacing:-0.775px;left:109.90px;">19.12.2022</span>
<span class="t" id="t87" style="top:856px;font-size:14px;color:#22242a;-webkit-text-stroke:0.32px #22242a;letter-spacing:0.729px;left:288.50px;">Транзакция по проекту: Доска почета YX-digital</span>
<span class="t" id="t88" style="top:856px;font-size:14px;color:#555962;letter-spacing:0.166px;left:1384.10px;">-5 000,00</span>
<span class="t" id="t89" style="top:856px;font-size:14px;color:#555962;letter-spacing:0.166px;left:1524.10px;">-5 000,00</span>
<span class="t" id="t90" style="top:856px;font-size:14px;color:#9aa3b5;letter-spacing:0.050px;left:1662.00px;">87 800,00</span>
<span class="t" id="t91" style="top:856px;font-size:14px;color:#9aa3b5;letter-spacing:0.050px;left:1802.00px;">48 800,00</span>
<span class="t" id="t92" style="top:905px;font-size:14px;color:#9aa3b5;letter-spacing:0.002px;left:109.90px;">22.08.2023</span>
<span class="t" id="t93" style="top:905px;font-size:14px;color:#22242a;-webkit-text-stroke:0.32px #22242a;letter-spacing:0.966px;left:269.80px;">Счет #000236</span>
<span class="t" id="t94" style="top:905px;font-size:14px;color:#555962;letter-spacing:0.050px;left:1381.90px;">63 000,00</span>
<span class="t" id="t95" style="top:905px;font-size:14px;color:#555962;letter-spacing:-0.083px;left:1557.60px;">0,00</span>
<span class="t" id="t96" style="top:905px;font-size:14px;color:#9aa3b5;letter-spacing:-0.242px;left:1656.80px;">150 800,00</span>
<span class="t" id="t97" style="top:905px;font-size:14px;color:#9aa3b5;letter-spacing:0.050px;left:1802.00px;">48 800,00</span>
<span class="t" id="t98" style="top:98px;font-size:11px;color:#8f9bb3;letter-spacing:0.152px;left:19.00px;">Старт</span>
<span class="t" id="t99" style="top:158px;font-size:11px;color:#8f9bb3;letter-spacing:0.192px;left:15.10px;">Задачи</span>
<span class="t" id="t100" style="top:218px;font-size:11px;color:#5b5e66;letter-spacing:0.360px;left:11.00px;">Проекты</span>
<span class="t" id="t101" style="top:278px;font-size:11px;color:#8f9bb3;letter-spacing:-0.481px;left:21.80px;">CRM</span>
<span class="t" id="t102" style="top:338px;font-size:11px;color:#8f9bb3;letter-spacing:0.489px;left:14.70px;">Группы</span>
<span class="t" id="t103" style="top:398px;font-size:11px;color:#8f9bb3;letter-spacing:0.362px;left:10.50px;">Команда</span>
<span class="t" id="t104" style="top:458px;font-size:11px;color:#8f9bb3;letter-spacing:-0.092px;left:22.10px;">База</span>
<span class="t" id="t105" style="top:472px;font-size:11px;color:#8f9bb3;letter-spacing:0.358px;left:15.60px;">знаний</span>
<span class="t" id="t106" style="top:532px;font-size:11px;color:#8f9bb3;letter-spacing:0.376px;left:12.30px;">Кабинет</span>
<span class="t" id="t107" style="top:546px;font-size:11px;color:#8f9bb3;letter-spacing:0.311px;left:9.50px;">партнера</span>
<span class="t" id="t108" style="top:606px;font-size:11px;color:#8f9bb3;letter-spacing:0.352px;left:10.30px;">Финансы</span>
<span class="t" id="t109" style="top:666px;font-size:11px;color:#8f9bb3;letter-spacing:0.158px;left:21.20px;">Agile</span>
<span class="t" id="t110" style="top:726px;font-size:11px;color:#8f9bb3;letter-spacing:0.750px;left:2.70px;">Документы</span>
<span class="t" id="t111" style="top:754px;font-size:7.2px;color:#fff;font-weight:700;letter-spacing:-0.391px;left:40.90px;">NEW</span>
</body>
</html>
